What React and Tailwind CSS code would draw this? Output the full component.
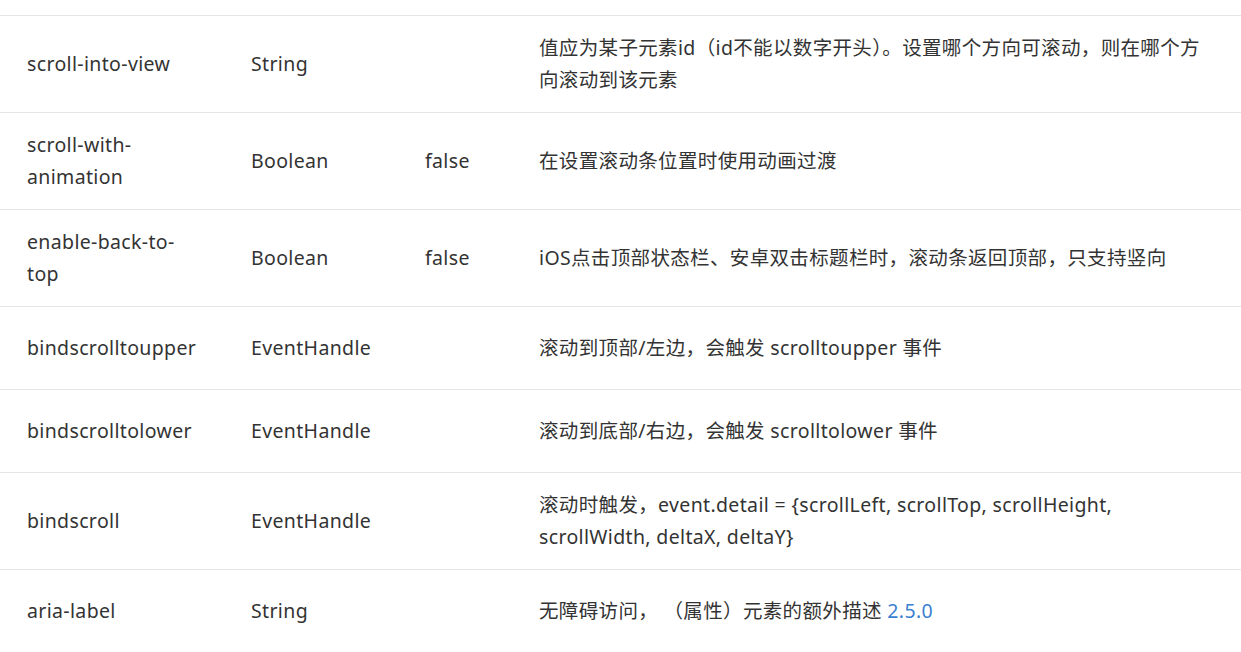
import React from "react";

const rows = [
  {
    name: ["scroll-into-view"],
    type: "String",
    def: "",
    desc: ["值应为某子元素id（id不能以数字开头）。设置哪个方向可滚动，则在哪个方", "向滚动到该元素"],
    tall: true,
  },
  {
    name: ["scroll-with-", "animation"],
    type: "Boolean",
    def: "false",
    desc: ["在设置滚动条位置时使用动画过渡"],
    tall: true,
  },
  {
    name: ["enable-back-to-", "top"],
    type: "Boolean",
    def: "false",
    desc: ["iOS点击顶部状态栏、安卓双击标题栏时，滚动条返回顶部，只支持竖向"],
    tall: true,
  },
  {
    name: ["bindscrolltoupper"],
    type: "EventHandle",
    def: "",
    desc: ["滚动到顶部/左边，会触发 scrolltoupper 事件"],
  },
  {
    name: ["bindscrolltolower"],
    type: "EventHandle",
    def: "",
    desc: ["滚动到底部/右边，会触发 scrolltolower 事件"],
  },
  {
    name: ["bindscroll"],
    type: "EventHandle",
    def: "",
    desc: ["滚动时触发，event.detail = {scrollLeft, scrollTop, scrollHeight,", "scrollWidth, deltaX, deltaY}"],
    tall: true,
  },
  {
    name: ["aria-label"],
    type: "String",
    def: "",
    desc: ["无障碍访问， （属性）元素的额外描述 "],
    version: "2.5.0",
  },
];

function Lines({ lines, extra }) {
  return lines.map((l, i) => (
    <div key={i} className="whitespace-pre">
      {l}
      {extra && i === lines.length - 1 && <span className="text-[#3b7fd1]">{extra}</span>}
    </div>
  ));
}

export default function App() {
  return (
    <div
      className="w-[1241px] h-[652px] overflow-hidden bg-white text-[#333] text-[19.5px] leading-[32px] tracking-[0.35px]"
      style={{ fontFamily: '"Noto Sans", "Noto Sans CJK SC", sans-serif' }}
    >
      <div className="h-[16px] border-b border-[#e6e6e6]" />
      {rows.map((r, i) => (
        <div
          key={i}
          className={`grid grid-cols-[251px_174px_114px_1fr] items-center border-b border-[#e6e6e6] ${
            r.tall ? "h-[97px]" : "h-[83px]"
          }`}
        >
          <div className="pl-[27px]">
            <Lines lines={r.name} />
          </div>
          <div>{r.type}</div>
          <div>{r.def}</div>
          <div>
            <Lines lines={r.desc} extra={r.version} />
          </div>
        </div>
      ))}
    </div>
  );
}
